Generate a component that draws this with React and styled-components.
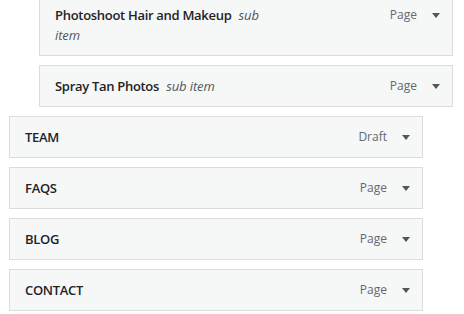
import React from 'react'
import styled, { createGlobalStyle } from 'styled-components'

const GlobalStyle = createGlobalStyle`
  body {
    margin: 0;
    background: #ffffff;
    font-family: "Open Sans", "Noto Sans", sans-serif;
    color: #1d2327;
    overflow: hidden;
  }
`

const MenuList = styled.ul`
  list-style: none;
  margin: -6px 0 0;
  padding: 0 0 0 9px;
  display: flex;
  flex-direction: column;
  gap: 9px;
`

const MenuItem = styled.li`
  width: 414px;
  margin-left: ${p => (p.depth || 0) * 30}px;
`

const Handle = styled.div`
  display: flex;
  align-items: flex-start;
  box-sizing: border-box;
  padding: 10px 0 10px 15px;
  background: #f6f7f7;
  border: 1px solid #dcdcde;
`

const Title = styled.div`
  flex: 1;
  min-width: 0;
  font-size: 13px;
  font-weight: 600;
  line-height: 20px;
  letter-spacing: -0.3px;
  color: #1d2327;
`

const SubLabel = styled.span`
  font-style: italic;
  font-weight: 400;
  letter-spacing: -0.1px;
  color: #50575e;
  padding-left: 4px;
`

const Controls = styled.div`
  flex: none;
  width: 184px;
  height: 20px;
  display: flex;
  align-items: center;
  justify-content: flex-end;
`

const ItemType = styled.span`
  font-size: 12px;
  color: #646970;
  line-height: 20px;
`

const Arrow = styled.svg`
  width: 8px;
  height: 5px;
  margin-left: 15px;
  margin-right: 12px;
  fill: #50575e;
`

const items = [
  { title: 'Photoshoot Hair and Makeup', type: 'Page', depth: 1 },
  { title: 'Spray Tan Photos', type: 'Page', depth: 1 },
  { title: 'TEAM', type: 'Draft', depth: 0 },
  { title: 'FAQS', type: 'Page', depth: 0 },
  { title: 'BLOG', type: 'Page', depth: 0 },
  { title: 'CONTACT', type: 'Page', depth: 0 },
]

export default function App() {
  return (
    <>
      <GlobalStyle />
      <MenuList>
        {items.map(item => (
          <MenuItem key={item.title} depth={item.depth}>
            <Handle>
              <Title>
                {item.title}{' '}
                {item.depth > 0 && <SubLabel>sub item</SubLabel>}
              </Title>
              <Controls>
                <ItemType>{item.type}</ItemType>
                <Arrow viewBox="0 0 8 5">
                  <path d="M0 0h8L4 5z" />
                </Arrow>
              </Controls>
            </Handle>
          </MenuItem>
        ))}
      </MenuList>
    </>
  )
}
